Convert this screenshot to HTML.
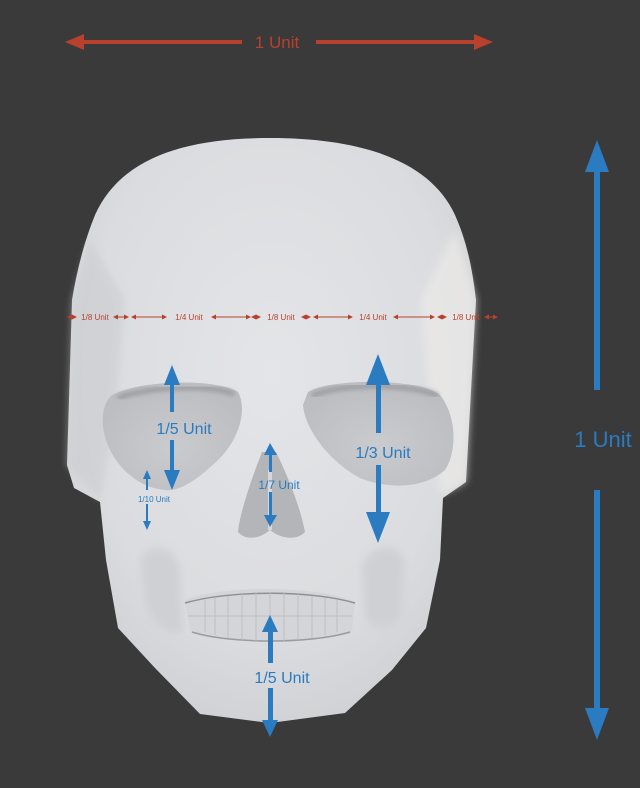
<!DOCTYPE html>
<html><head><style>
html,body{margin:0;padding:0;background:#3a3a3a;}
svg{display:block}
text{font-family:"Liberation Sans",sans-serif;}
</style></head><body>
<svg width="640" height="788" viewBox="0 0 640 788" xmlns="http://www.w3.org/2000/svg">
<defs>
<radialGradient id="sk" cx="0.5" cy="0.4" r="0.65">
<stop offset="0" stop-color="#e4e5e8"/>
<stop offset="0.7" stop-color="#dbdcdf"/>
<stop offset="1" stop-color="#cecfd2"/>
</radialGradient>
<radialGradient id="eye" cx="0.5" cy="0.6" r="0.6">
<stop offset="0" stop-color="#cacbce"/>
<stop offset="1" stop-color="#bcbdc0"/>
</radialGradient>
<filter id="bl"><feGaussianBlur stdDeviation="4"/></filter>
<filter id="bl2"><feGaussianBlur stdDeviation="2"/></filter>
<marker id="rh" markerWidth="5" markerHeight="5" refX="4" refY="2.5" orient="auto-start-reverse"><path d="M0,0 L5,2.5 L0,5 Z" fill="#b8412e"/></marker>
</defs>
<rect width="640" height="788" fill="#3a3a3a"/>
<!-- skull -->
<path d="M270 138 C180 138 120 160 95 215 C85 240 78 265 72 300 L67 465 L74 488 L100 502 L106 560 L118 628 L155 668 L200 714 L270 723 L345 713 L392 670 L426 628 L440 560 L443 498 L466 482 L476 300 C472 265 466 240 455 215 C430 160 360 138 270 138 Z" fill="url(#sk)"/>
<path d="M90 240 L72 300 L67 465 L100 500 L115 420 L125 300 Z" fill="#c8c9cc" opacity="0.5" filter="url(#bl)"/>
<path d="M455 230 L476 300 L466 482 L440 495 L430 400 L420 300 Z" fill="#eceae8" opacity="0.7" filter="url(#bl)"/>
<!-- eye sockets -->
<path d="M112 395 C140 380 215 378 238 392 C248 410 238 440 220 458 C200 478 180 492 165 490 C140 488 120 470 110 450 C100 430 100 405 112 395 Z" fill="url(#eye)"/>
<path d="M118 398 C150 386 210 384 234 394" stroke="#9c9da0" stroke-width="5" fill="none" filter="url(#bl2)"/>
<path d="M308 392 C330 378 420 378 440 395 C456 415 458 450 445 470 C425 488 390 490 360 478 C330 462 305 430 303 405 Z" fill="url(#eye)"/>
<path d="M312 396 C340 383 410 383 438 396" stroke="#9c9da0" stroke-width="5" fill="none" filter="url(#bl2)"/>
<!-- nose -->
<path d="M262 452 C255 470 240 510 238 532 C245 540 258 540 270 530 C282 540 298 540 305 532 C300 505 285 470 276 452 Z" fill="#b4b5b8"/>
<path d="M270 470 L270 530" stroke="#d6d7da" stroke-width="4"/>
<!-- cheek recesses -->
<path d="M140 560 C150 540 175 545 180 570 L182 630 C170 640 150 620 145 600 Z" fill="#cdced1" opacity="0.8" filter="url(#bl)"/>
<path d="M362 565 C370 545 395 540 405 560 L400 615 C390 635 370 630 365 615 Z" fill="#cdced1" opacity="0.8" filter="url(#bl)"/>
<!-- teeth -->
<path d="M185 600 C220 585 320 585 355 602 L352 632 C320 645 220 645 190 632 Z" fill="#d4d5d8"/>
<path d="M185 603 C230 590 310 590 355 603" stroke="#8e8f92" stroke-width="1.5" fill="none"/>
<path d="M192 632 C230 644 310 644 350 632" stroke="#9a9b9e" stroke-width="1.5" fill="none"/>
<g stroke="#bdbec1" stroke-width="1">
<line x1="205" y1="600" x2="205" y2="632"/><line x1="215" y1="598" x2="215" y2="635"/><line x1="228" y1="596" x2="228" y2="638"/><line x1="242" y1="594" x2="242" y2="640"/><line x1="256" y1="593" x2="256" y2="641"/><line x1="270" y1="592" x2="270" y2="641"/><line x1="284" y1="593" x2="284" y2="641"/><line x1="298" y1="594" x2="298" y2="640"/><line x1="312" y1="596" x2="312" y2="638"/><line x1="325" y1="598" x2="325" y2="635"/><line x1="337" y1="600" x2="337" y2="632"/>
<line x1="188" y1="616" x2="352" y2="616"/>
</g>
<!-- top red arrow -->
<g stroke="#b8412e" stroke-width="4">
<line x1="80" y1="42" x2="242" y2="42"/><line x1="316" y1="42" x2="478" y2="42"/>
</g>
<path d="M65 42 L84 34 L84 50 Z M493 42 L474 34 L474 50 Z" fill="#b8412e"/>
<text x="277" y="48" text-anchor="middle" font-size="17" fill="#b8412e">1 Unit</text>
<!-- small red row -->
<g stroke="#b8412e" stroke-width="1" marker-start="url(#rh)" marker-end="url(#rh)">
<line x1="68" y1="317" x2="76" y2="317"/>
<line x1="114" y1="317" x2="128" y2="317"/>
<line x1="132" y1="317" x2="166" y2="317"/>
<line x1="212" y1="317" x2="250" y2="317"/>
<line x1="252" y1="317" x2="260" y2="317"/>
<line x1="302" y1="317" x2="310" y2="317"/>
<line x1="314" y1="317" x2="352" y2="317"/>
<line x1="394" y1="317" x2="434" y2="317"/>
<line x1="438" y1="317" x2="446" y2="317"/>
<line x1="485" y1="317" x2="497" y2="317"/>
</g>
<g font-size="8" fill="#b8412e" text-anchor="middle">
<text x="95" y="320">1/8 Unit</text><text x="189" y="320">1/4 Unit</text><text x="281" y="320">1/8 Unit</text><text x="373" y="320">1/4 Unit</text><text x="466" y="320">1/8 Unit</text>
</g>
<!-- blue arrows -->
<g fill="#2a7bc0" stroke="none">
<rect x="594" y="168" width="6" height="222"/><rect x="594" y="490" width="6" height="222"/>
<path d="M597 140 L585 172 L609 172 Z M597 740 L585 708 L609 708 Z"/>
<rect x="170" y="380" width="4" height="32"/><rect x="170" y="440" width="4" height="35"/>
<path d="M172 365 L164 385 L180 385 Z M172 490 L164 470 L180 470 Z"/>
<rect x="376" y="375" width="5" height="58"/><rect x="376" y="465" width="5" height="55"/>
<path d="M378 354 L366 385 L390 385 Z M378 543 L366 512 L390 512 Z"/>
<rect x="269" y="450" width="3" height="22"/><rect x="269" y="492" width="3" height="25"/>
<path d="M270 443 L264 455 L277 455 Z M270 527 L264 515 L277 515 Z"/>
<rect x="146" y="475" width="2" height="15"/><rect x="146" y="504" width="2" height="20"/>
<path d="M147 470 L143 479 L151 479 Z M147 530 L143 521 L151 521 Z"/>
<rect x="268" y="625" width="5" height="38"/><rect x="268" y="688" width="5" height="38"/>
<path d="M270 615 L262 632 L278 632 Z M270 737 L262 720 L278 720 Z"/>
</g>
<g fill="#2a7bc0" text-anchor="middle">
<text x="603" y="447" font-size="22">1 Unit</text>
<text x="184" y="434" font-size="16">1/5 Unit</text>
<text x="383" y="458" font-size="16">1/3 Unit</text>
<text x="279" y="489" font-size="12">1/7 Unit</text>
<text x="154" y="502" font-size="8">1/10 Unit</text>
<text x="282" y="683" font-size="16">1/5 Unit</text>
</g>
</svg>
</body></html>
